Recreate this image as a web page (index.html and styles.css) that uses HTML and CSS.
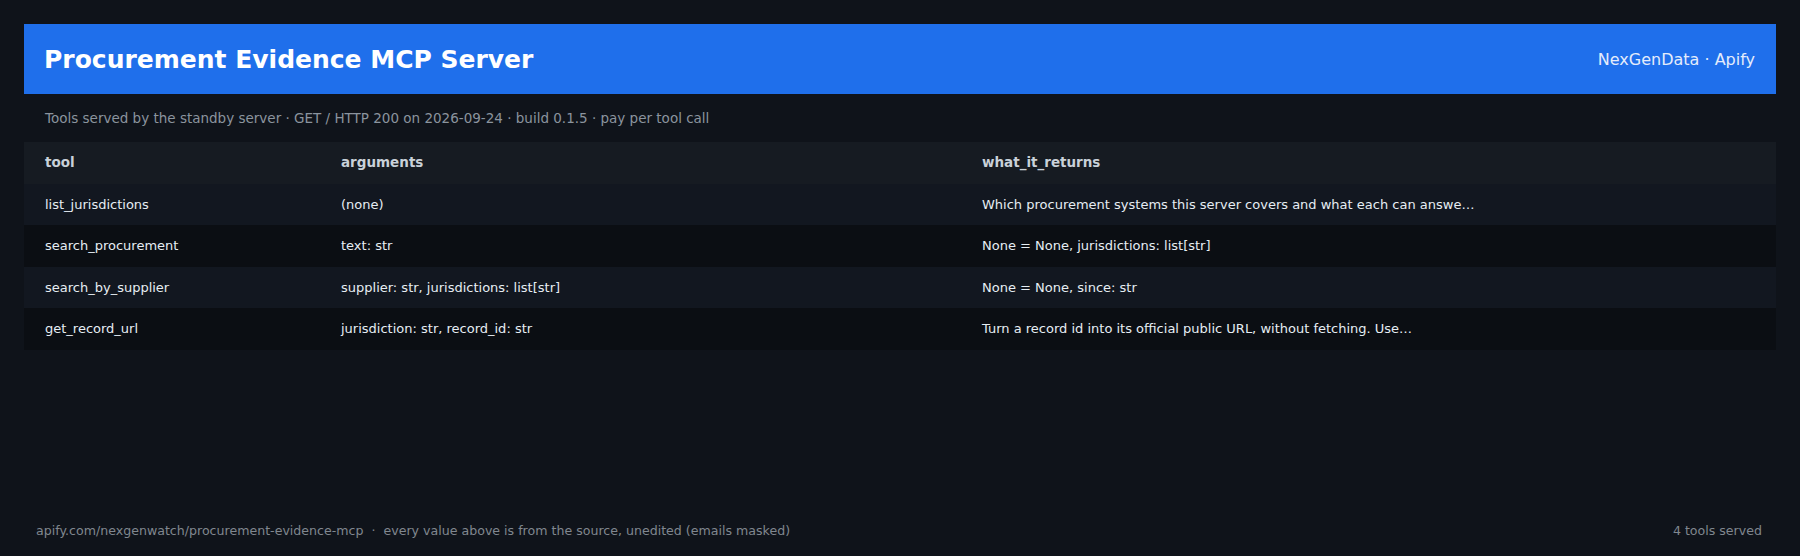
FILE: index.html
```html
<!DOCTYPE html>
<html lang="en">
<head>
    <meta charset="UTF-8">
    <meta name="viewport" content="width=device-width, initial-scale=1.0">
    <title>Procurement Evidence MCP Server</title>
    <link rel="stylesheet" href="styles.css">
</head>
<body>
    <div class="page">
        <header class="topbar">
            <h1>Procurement Evidence MCP Server</h1>
            <span class="brand">NexGenData · Apify</span>
        </header>

        <p class="subtitle">Tools served by the standby server · GET / HTTP 200 on 2026-09-24 · build 0.1.5 · pay per tool call</p>

        <table class="tools">
            <colgroup>
                <col class="col-tool">
                <col class="col-args">
                <col>
            </colgroup>
            <thead>
                <tr>
                    <th>tool</th>
                    <th>arguments</th>
                    <th>what_it_returns</th>
                </tr>
            </thead>
            <tbody>
                <tr>
                    <td>list_jurisdictions</td>
                    <td>(none)</td>
                    <td>Which procurement systems this server covers and what each can answe…</td>
                </tr>
                <tr>
                    <td>search_procurement</td>
                    <td>text: str</td>
                    <td>None = None, jurisdictions: list[str]</td>
                </tr>
                <tr>
                    <td>search_by_supplier</td>
                    <td>supplier: str, jurisdictions: list[str]</td>
                    <td>None = None, since: str</td>
                </tr>
                <tr>
                    <td>get_record_url</td>
                    <td>jurisdiction: str, record_id: str</td>
                    <td>Turn a record id into its official public URL, without fetching. Use…</td>
                </tr>
            </tbody>
        </table>

        <footer class="footer">
            <span>apify.com/nexgenwatch/procurement-evidence-mcp &nbsp;·&nbsp; every value above is from the source, unedited (emails masked)</span>
            <span>4 tools served</span>
        </footer>
    </div>
</body>
</html>
```

FILE: styles.css
```css
* {
    box-sizing: border-box;
}
html, body {
    margin: 0;
    height: 100%;
}
body {
    font-family: "DejaVu Sans", Verdana, sans-serif;
    background-color: #0f131a;
    color: #e6edf3;
}
.page {
    display: flex;
    flex-direction: column;
    min-height: 100vh;
    padding: 24px 24px 18px;
}
.topbar {
    display: flex;
    align-items: center;
    justify-content: space-between;
    height: 70px;
    padding: 0 21px 0 20px;
    background-color: #1f6feb;
}
.topbar h1 {
    margin: 0;
    font-size: 25px;
    font-weight: bold;
    color: #ffffff;
}
.brand {
    font-size: 16px;
    color: #e4ecfb;
}
.subtitle {
    margin: 0;
    padding: 14px 21px;
    font-size: 13.5px;
    line-height: 20px;
    color: #8b949e;
}
.tools {
    width: 100%;
    border-collapse: collapse;
    table-layout: fixed;
    font-size: 13px;
}
.col-tool { width: 296px; }
.col-args { width: 641px; }
.tools th,
.tools td {
    text-align: left;
    padding: 11px 21px;
    line-height: 19.5px;
    white-space: nowrap;
    overflow: hidden;
}
.tools th {
    background-color: #161b22;
    color: #c9d1d9;
    font-size: 13.5px;
    font-weight: bold;
}
.tools tbody tr:nth-child(odd) td {
    background-color: #121720;
}
.tools tbody tr:nth-child(even) td {
    background-color: #0b0e13;
}
.footer {
    display: flex;
    justify-content: space-between;
    margin-top: auto;
    padding: 0 14px 0 12px;
    font-size: 12.6px;
    line-height: 15px;
    color: #80878f;
}
```
